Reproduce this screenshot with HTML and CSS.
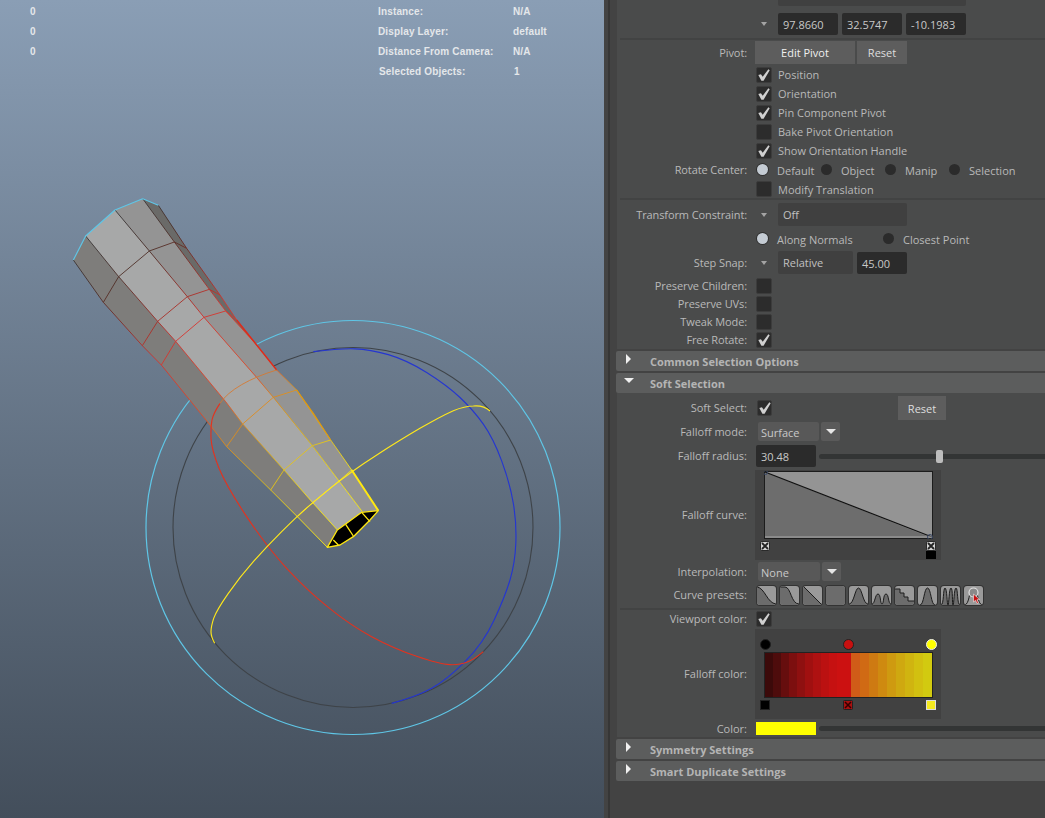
FILE: index.html
```html
<!DOCTYPE html>
<html lang="en">
<head>
    <meta charset="UTF-8">
    <title>Soft Selection</title>
    <link rel="stylesheet" href="styles.css">
</head>
<body>
    <svg class="defs">
        <symbol id="check" viewBox="0 0 16 16">
            <path d="M1.500 8 L4.500 7 L6.500 10 L13 1.500 L14.500 2.500 L7.500 14.500 L5 14.500 Z" fill="#d0d0d0"/>
        </symbol>
        <symbol id="cross" viewBox="0 0 10 10">
            <rect x="0.5" y="0.5" width="9" height="9" rx="1.500" fill="#d4d4d4" stroke="#2a2a2a"/>
            <path d="M2 2 L8 8 M8 2 L2 8" stroke="#222" stroke-width="1.800"/>
        </symbol>
    </svg>

    <main class="viewport">
        <svg class="scene" width="604" height="818">
            <defs>
                <linearGradient id="edge" gradientUnits="userSpaceOnUse" x1="76" y1="168" x2="832" y2="1050">
                    <stop offset="0" stop-color="#333"/>
                    <stop offset=".136" stop-color="#4a2a22"/>
                    <stop offset=".289" stop-color="#a82a22"/>
                    <stop offset=".358" stop-color="#d8302a"/>
                    <stop offset=".56" stop-color="#e84a20"/>
                    <stop offset=".633" stop-color="#e08a18"/>
                    <stop offset=".793" stop-color="#e8c410"/>
                    <stop offset=".905" stop-color="#ffe810"/>
                    <stop offset="1" stop-color="#ffee10"/>
                </linearGradient>
            </defs>

            <circle cx="353" cy="527.5" r="207" fill="none" stroke="#5fc6e6" stroke-width="1.200"/>
            <circle cx="353" cy="527.5" r="180" fill="none" stroke="#3e4348" stroke-width="1.100"/>

            <!-- mesh, coordinates taken at 3x -->
            <g transform="translate(60 180) scale(.33333)" stroke-linejoin="round" fill="none">
                <polygon fill="#6a6a68" points="248,56 295,76 380,205 480,345 530,420 590,495 497,393 448,328 343,186"/>
                <polygon fill="#7e7d7b" points="40,240 130,367 247,497 304,555 450,735 500,800 632,930 712,1010 802,1102 832,1050 758,968 672,870 548,732 497,665 347,484 293,424 176,290 77,168"/>
                <polygon fill="#a7a8a8" points="77,168 176,290 293,424 347,484 497,665 548,732 672,870 758,968 832,1050 907,995 837,903 757,797 640,652 588,590 432,412 382,350 268,213 165,90"/>
                <polygon fill="#949494" points="165,90 268,213 382,350 432,412 588,590 640,652 757,797 837,903 907,995 955,992 875,870 812,780 710,630 650,570 590,495 497,393 448,328 343,186 248,56"/>

                <g stroke="url(#edge)" stroke-width="2.600">
                    <polyline points="40,240 130,367 247,497 304,555 450,735 500,800 632,930 712,1010 802,1102"/>
                    <polyline points="77,168 176,290 293,424 347,484 497,665 548,732 672,870 758,968 832,1050"/>
                    <polyline points="165,90 268,213 382,350 432,412 588,590 640,652 757,797 837,903 907,995"/>
                    <polyline points="248,56 343,186 448,328 497,393 590,495 650,570 710,630 812,780 875,870 955,992"/>
                    <polyline points="295,76 380,205 480,345 530,420 590,495"/>
                    <polyline points="130,367 176,290 268,213 343,186 380,205"/>
                    <polyline points="247,497 293,424 382,350 448,328 480,345"/>
                    <polyline points="304,555 347,484 432,412 497,393 530,420"/>
                    <polyline points="500,800 548,732 640,652 710,630"/>
                    <polyline points="632,930 672,870 757,797 812,780"/>
                    <polyline points="712,1010 758,968 837,903 875,870"/>
                </g>
                <polyline points="530,420 590,495 650,570" stroke="#e02a1a" stroke-width="4"/>
                <polyline points="710,630 760,700 812,780" stroke="#e09a10" stroke-width="3.500"/>
                <polyline points="875,870 955,992" stroke="#ffe810" stroke-width="6"/>
                <polyline points="40,240 77,168 165,90 248,56 295,76" stroke="#5fc6e6" stroke-width="3.500"/>

                <polygon fill="#000" stroke="#ffe810" stroke-width="4" points="802,1102 840,1095 880,1070 930,1020 955,992 905,997 860,1030 832,1050"/>
                <path d="M857 1033 L880 1068 M905 997 L930 1025 M820 1080 L835 1095" stroke="#ffe810" stroke-width="4"/>
            </g>

            <!-- rotate manip rings -->
            <g transform="translate(140 310) scale(.33333)" fill="none" stroke-width="3.400">
                <path stroke="#2536d0" d="M520 125 Q600 115 645 116.5 Q690 118 745 134 Q800 150 860 187.5 Q920 225 960 262.5 Q1000 300 1030 342.5 Q1060 385 1085 452.5 Q1110 520 1120 580 Q1130 640 1127.5 700 Q1125 760 1110 810 Q1095 860 1062.5 930 Q1030 1000 975 1055 Q920 1110 875 1135 Q830 1160 755 1180"/>
                <path stroke="#e2331f" d="M1030 1025 Q1000 1050 980 1057 Q960 1065 930 1064 Q900 1063 830 1039 Q760 1015 695 980 Q630 945 565 892 Q500 840 440 775 Q380 710 320 620 Q260 530 237 475 Q215 420 213 385 Q212 350 216 330 Q220 310 240 280"/>
                <path stroke="#d9772a" stroke-width="2.500" d="M240 280 Q260 250 305 224 Q350 198 410 180"/>
                <path stroke="#ffe81a" d="M1050 303 Q1030 285 1000 288 Q975 288 940 302 Q900 320 840 355 Q780 390 707 437 Q635 483 577 530 Q520 577 495 598 Q470 620 425 665 Q380 710 340 755 Q300 800 265 850 Q230 900 221 925 Q213 950 213 965 Q213 980 224 1000"/>
            </g>
        </svg>

        <div class="hud">
            <span>0</span><span>Instance:</span><span>N/A</span>
            <span>0</span><span>Display Layer:</span><span>default</span>
            <span>0</span><span>Distance From Camera:</span><span>N/A</span>
            <span></span><span class="hud-shift">Selected Objects:</span><span class="hud-shift">1</span>
        </div>
    </main>

    <aside class="panel">
        <div class="group group-top">
            <div class="cut-field"></div>

            <div class="row row-vec">
                <label></label>
                <span class="arrow"></span>
                <span class="input w60">97.8660</span>
                <span class="input w60">32.5747</span>
                <span class="input w60">-10.1983</span>
            </div>
            <div class="sep"></div>

            <div class="row row-btn">
                <label>Pivot:</label>
                <button class="btn btn-strong w100">Edit Pivot</button>
                <button class="btn w50">Reset</button>
            </div>
            <div class="row row-19"><label></label><span class="box"><svg><use href="#check"/></svg></span><span class="cap">Position</span></div>
            <div class="row row-19"><label></label><span class="box"><svg><use href="#check"/></svg></span><span class="cap">Orientation</span></div>
            <div class="row row-19"><label></label><span class="box"><svg><use href="#check"/></svg></span><span class="cap">Pin Component Pivot</span></div>
            <div class="row row-19"><label></label><span class="box"></span><span class="cap">Bake Pivot Orientation</span></div>
            <div class="row row-19"><label></label><span class="box"><svg><use href="#check"/></svg></span><span class="cap">Show Orientation Handle</span></div>
            <div class="row row-20">
                <label>Rotate Center:</label>
                <div class="radios">
                    <span class="radio-item"><i class="radio on"></i>Default</span>
                    <span class="radio-item"><i class="radio"></i>Object</span>
                    <span class="radio-item"><i class="radio"></i>Manip</span>
                    <span class="radio-item"><i class="radio"></i>Selection</span>
                </div>
            </div>
            <div class="row row-18"><label></label><span class="box"></span><span class="cap">Modify Translation</span></div>
            <div class="sep sep-low"></div>

            <div class="row row-drop">
                <label>Transform Constraint:</label>
                <span class="arrow"></span>
                <span class="drop w129">Off</span>
            </div>
            <div class="row row-18 row-normals">
                <label></label>
                <div class="radios radios-wide">
                    <span class="radio-item"><i class="radio on"></i>Along Normals</span>
                    <span class="radio-item"><i class="radio"></i>Closest Point</span>
                </div>
            </div>
            <div class="row row-snap">
                <label>Step Snap:</label>
                <span class="arrow"></span>
                <span class="drop w75">Relative</span>
                <span class="input w50 input-snap">45.00</span>
            </div>
            <div class="row row-18 row-first"><label>Preserve Children:</label><span class="box"></span></div>
            <div class="row row-18"><label>Preserve UVs:</label><span class="box"></span></div>
            <div class="row row-18"><label>Tweak Mode:</label><span class="box"></span></div>
            <div class="row row-18"><label>Free Rotate:</label><span class="box"><svg><use href="#check"/></svg></span></div>
        </div>

        <div class="header"><i class="tri-right"></i>Common Selection Options</div>
        <div class="header"><i class="tri-down"></i>Soft Selection</div>

        <div class="group group-soft">
            <div class="row row-24">
                <label>Soft Select:</label>
                <span class="box box-narrow"><svg><use href="#check"/></svg></span>
                <button class="btn w48 btn-soft-reset">Reset</button>
            </div>
            <div class="row row-option">
                <label>Falloff mode:</label>
                <span class="option w61">Surface</span>
                <span class="option-arrow"></span>
            </div>
            <div class="row row-radius">
                <label>Falloff radius:</label>
                <span class="input w60 input-radius">30.48</span>
                <div class="track"><i class="thumb"></i></div>
            </div>

            <div class="row row-panel row-curve">
                <label>Falloff curve:</label>
                <div class="ramp">
                    <svg class="graph" width="169" height="68">
                        <rect width="169" height="68" fill="#949494"/>
                        <polygon points="1,1 168,67 1,67" fill="#6d6d6d"/>
                        <line x1="1" y1="1" x2="168" y2="66" stroke="#111" stroke-width="1.200"/>
                        <rect x="0.5" y="0.5" width="168" height="67" fill="none" stroke="#1c1c1c"/>
                        <line x1="1" y1="66" x2="168" y2="66" stroke="#aaa"/>
                        <circle cx="1.500" cy="1.500" r="2" fill="none" stroke="#3b4866"/>
                        <circle cx="166" cy="66" r="2.500" fill="none" stroke="#3b4866"/>
                    </svg>
                    <svg class="mark mark-left"><use href="#cross"/></svg>
                    <svg class="mark mark-right"><use href="#cross"/></svg>
                    <i class="mark mark-right mark-black"></i>
                </div>
            </div>

            <div class="row row-option">
                <label>Interpolation:</label>
                <span class="option w62">None</span>
                <span class="option-arrow"></span>
            </div>
            <div class="row row-presets">
                <label>Curve presets:</label>
                <div class="presets">
                    <svg class="preset"><path class="low" d="M0 1 C8 2 10 17 19 18 V19 H0 Z"/><path class="ln" d="M0 1 C8 2 10 17 19 18"/></svg>
                    <svg class="preset"><path class="low" d="M0 1 H5 C11 1 11 18 19 18 V19 H0 Z"/><path class="ln" d="M0 1 H5 C11 1 11 18 19 18"/></svg>
                    <svg class="preset"><path class="low" d="M0 0 L19 19 H0 Z"/><path class="ln" d="M0 0 L19 19"/></svg>
                    <svg class="preset"><rect class="low" width="19" height="19"/></svg>
                    <svg class="preset"><path class="low" d="M0 18 C5 18 6 2 9.500 2 C13 2 14 18 19 18 V19 H0 Z"/><path class="ln" d="M0 18 C5 18 6 2 9.500 2 C13 2 14 18 19 18"/></svg>
                    <svg class="preset"><path class="low" d="M0 18 C3 18 3 8 6 8 C9 8 8 18 10 18 C12 18 11 8 14 8 C17 8 16 18 19 18 V19 H0 Z"/><path class="ln" d="M0 18 C3 18 3 8 6 8 C9 8 8 18 10 18 C12 18 11 8 14 8 C17 8 16 18 19 18"/></svg>
                    <svg class="preset"><path class="low" d="M0 3 H5 V7 H9 V11 H13 V15 H19 V19 H0 Z"/><path class="ln" d="M0 3 H5 V7 H9 V11 H13 V15 H19"/></svg>
                    <svg class="preset"><path class="low" d="M2 19 C6 19 6 2 9.500 2 C13 2 13 19 17 19 Z"/><path class="ln" d="M2 19 C6 19 6 2 9.500 2 C13 2 13 19 17 19"/></svg>
                    <svg class="preset"><path class="low" d="M0 19 C3 19 2 2 4 2 C6 2 6 19 7 19 C8 19 8 2 10 2 C12 2 11 19 12 19 C13 19 13 2 15 2 C17 2 16 19 19 19 Z"/><path class="ln" d="M0 19 C3 19 2 2 4 2 C6 2 6 19 7 19 C8 19 8 2 10 2 C12 2 11 19 12 19 C13 19 13 2 15 2 C17 2 16 19 19 19"/></svg>
                    <svg class="preset">
                        <path class="ln" d="M1 19 C5 17 5 9 6 8 M13 8 C14 10 14 17 18 19"/>
                        <circle cx="9.500" cy="6.500" r="4.500" fill="#8a8a8a" stroke="#e4e4e4" stroke-width="1.200"/>
                        <path d="M9.500 8 L9.500 16 L11.500 14.300 L13 17.500 L14.500 16.800 L13 13.800 L15.500 13.500 Z" fill="#c81010" stroke="#eee" stroke-width=".6"/>
                    </svg>
                </div>
            </div>
            <div class="sep sep-preset"></div>

            <div class="row row-18"><label>Viewport color:</label><span class="box"><svg><use href="#check"/></svg></span></div>

            <div class="row row-panel row-color">
                <label>Falloff color:</label>
                <div class="ramp">
                    <i class="dot dot-a"></i>
                    <i class="dot dot-b"></i>
                    <i class="dot dot-c"></i>
                    <div class="bands"></div>
                    <i class="mark mark-left swatch-a"></i>
                    <svg class="mark mark-mid"><rect x=".5" y=".5" width="9" height="9" rx="1" fill="#a81010" stroke="#222"/><path d="M2 2 L8 8 M8 2 L2 8" stroke="#300" stroke-width="1.500"/></svg>
                    <i class="mark mark-right swatch-c"></i>
                </div>
            </div>

            <div class="row row-swatch">
                <label>Color:</label>
                <span class="swatch"></span>
                <div class="track track-thin"></div>
            </div>
        </div>

        <div class="header"><i class="tri-right"></i>Symmetry Settings</div>
        <div class="header"><i class="tri-right"></i>Smart Duplicate Settings</div>
    </aside>
</body>
</html>
```

FILE: styles.css
```css
* {
    margin: 0;
    padding: 0;
    box-sizing: border-box;
}

html, body {
    height: 100%;
    overflow: hidden;
}

body {
    display: flex;
    background-color: #444;
    font-family: "Open Sans", "Liberation Sans", sans-serif;
    font-size: 11px;
    color: #b9b9b9;
}

.defs {
    display: none;
}

/* 3d view */
.viewport {
    position: relative;
    flex: 0 0 604px;
    height: 818px;
    background: linear-gradient(#8a9eb5, #434e5b);
}

.scene {
    position: absolute;
    left: 0;
    top: 0;
}

.hud {
    position: absolute;
    left: 30px;
    top: 1px;
    display: grid;
    grid-template-columns: 348px 135px auto;
    grid-auto-rows: 20px;
    align-items: center;
    font-family: "Liberation Sans", sans-serif;
    font-weight: bold;
    font-size: 10px;
    letter-spacing: 0.15px;
    color: #e4e7ea;
}

.hud-shift {
    margin-left: 1px;
}

/* side panel */
.panel {
    flex: 1;
    min-width: 0;
    height: 818px;
    padding-left: 12px;
    background:
        linear-gradient(#363636, #363636) 4px 0 / 2px 100% no-repeat,
        #434343;
    overflow: hidden;
}

.group {
    margin-left: 1px;
    background-color: #4a4b4b;
}

.group-top {
    height: 349px;
}

.group-soft {
    height: 344px;
    padding-top: 3px;
}

.cut-field {
    width: 188px;
    height: 6px;
    margin-left: 161px;
    border-radius: 0 0 2px 2px;
    background-color: #404040;
}

.sep {
    height: 2px;
    margin: 3px 0 1px 3px;
    background-color: #424343;
}

.sep-low {
    margin-top: 0;
    margin-bottom: 3px;
}

.sep-preset {
    margin-top: 3px;
    margin-bottom: 0;
}

.header {
    position: relative;
    height: 20px;
    margin-top: 2px;
    padding-left: 34px;
    line-height: 21px;
    font-weight: bold;
    color: #b4b4b4;
    background-color: #5c5d5d;
    border-radius: 2px 0 0 2px;
}

.tri-right {
    position: absolute;
    left: 10px;
    top: 3px;
    border-left: 5px solid #f0f0f0;
    border-top: 5px solid transparent;
    border-bottom: 5px solid transparent;
}

.tri-down {
    position: absolute;
    left: 8px;
    top: 5px;
    border-top: 5px solid #f0f0f0;
    border-left: 5px solid transparent;
    border-right: 5px solid transparent;
}

.row {
    display: flex;
    align-items: center;
    white-space: nowrap;
}

.row label {
    flex: 0 0 130px;
    margin-right: 8px;
    text-align: right;
}

.group-top .row label {
    letter-spacing: -0.1px;
}

/* these labels sit a pixel above the row centre */
.row-18 label,
.row-20 label,
.row-24 label,
.row-radius label,
.row-panel label,
.row-presets label {
    padding-bottom: 2px;
}

.row-vec { height: 22px; margin-top: 7px; }
.row-btn { height: 23px; margin-bottom: 1px; }
.row-19 { height: 19px; }
.row-20 { height: 20px; }
.row-18 { height: 18px; }
.row-24 { height: 24px; }
.row-drop { height: 23px; }
.row-normals { margin-top: 4px; }
.row-snap { height: 23px; margin-top: 3px; }
.row-first { margin-top: 3px; }
.row-option { height: 19px; margin-top: 2px; }
.row-radius { height: 22px; margin-top: 4px; }
.row-panel { height: 90px; }
.row-curve { margin-top: 3px; }
.row-color { margin-top: 1px; }
.row-presets { height: 19px; margin-top: 5px; }
.row-swatch { height: 13px; margin-top: 3px; }

.arrow {
    position: relative;
    flex: 0 0 23px;
    height: 0;
}

.arrow::after {
    content: "";
    position: absolute;
    left: 6px;
    top: -2px;
    border-top: 4px solid #a4a4a4;
    border-left: 3.5px solid transparent;
    border-right: 3.5px solid transparent;
}

.input {
    display: block;
    height: 22px;
    margin-right: 4px;
    padding-left: 5px;
    line-height: 23px;
    border-radius: 2px;
    color: #c8c8c8;
    background-color: #2b2b2b;
}

.input-snap {
    margin-left: 4px;
}

.input-radius {
    margin-left: 1px;
    margin-right: 3px;
}

.drop {
    display: block;
    height: 23px;
    padding-left: 5px;
    line-height: 23px;
    border-radius: 2px;
    color: #c0c0c0;
    background-color: #404040;
}

.w48 { width: 48px; }
.w50 { width: 50px; }
.w60 { width: 60px; }
.w61 { width: 61px; }
.w62 { width: 62px; }
.w75 { width: 75px; }
.w100 { width: 100px; }
.w129 { width: 129px; }

.btn {
    height: 23px;
    border: none;
    font: inherit;
    color: #dedede;
    background-color: #5d5d5d;
}

.btn-strong {
    margin-right: 2px;
    color: #f0f0f0;
}

.btn-soft-reset {
    height: 24px;
    margin-left: 126px;
}

.box {
    flex: 0 0 16px;
    width: 16px;
    height: 16px;
    margin-left: 1px;
    border: 1px solid #3c3c3c;
    border-radius: 2px;
    background-color: #2c2c2c;
}

.box svg {
    display: block;
    width: 14px;
    height: 14px;
}

.box-narrow {
    flex-basis: 15px;
    width: 15px;
    margin-left: 2px;
}

.cap {
    margin-left: 6px;
}

.radios {
    display: grid;
    grid-template-columns: repeat(4, 64px);
    margin-left: 2px;
}

.radios-wide {
    grid-template-columns: 126px auto;
}

.radio-item {
    display: flex;
    align-items: center;
    line-height: 16px;
    padding-top: 2px;
}

.radio {
    flex: 0 0 11px;
    width: 11px;
    height: 11px;
    margin: -3px 9px 0 0;
    border-radius: 50%;
    background-color: #2b2b2b;
}

.radio.on {
    background-color: #c4cbd3;
    box-shadow: 0 0 0 1px #2f2f2f;
}

.option {
    display: block;
    height: 19px;
    margin-left: 3px;
    padding-left: 3px;
    line-height: 21px;
    border-radius: 2px;
    color: #c8c8c8;
    background-color: #585858;
}

.option-arrow {
    position: relative;
    flex: 0 0 19px;
    height: 19px;
    margin-left: 2px;
    border-radius: 2px;
    background-color: #5a5a5a;
}

.option-arrow::after {
    content: "";
    position: absolute;
    left: 5px;
    top: 7px;
    border-top: 5px solid #e6e6e6;
    border-left: 5px solid transparent;
    border-right: 5px solid transparent;
}

.track {
    position: relative;
    flex: 1;
    height: 5px;
    border-radius: 3px 0 0 3px;
    background-color: #333535;
}

.thumb {
    position: absolute;
    left: 117px;
    top: -4px;
    width: 7px;
    height: 13px;
    border-radius: 2px;
    background-color: #bdbdbd;
}

.track-thin {
    margin-left: 3px;
}

.swatch {
    flex: 0 0 60px;
    height: 13px;
    margin-left: 1px;
    background-color: #ffff00;
}

/* curve and colour ramps */
.ramp {
    position: relative;
    width: 186px;
    height: 90px;
    background-color: #414141;
}

.graph {
    position: absolute;
    left: 9px;
    top: 1px;
}

.mark {
    position: absolute;
    display: block;
    top: 71px;
    width: 10px;
    height: 10px;
}

.mark-left { left: 5px; }
.mark-mid { left: 88px; }
.mark-right { left: 171px; }

.mark-black {
    top: 81px;
    height: 8px;
    background-color: #000;
}

.swatch-a {
    background-color: #000;
    border: 1px solid #222;
}

.swatch-c {
    background-color: #f4ea20;
    border: 1px solid #ddd;
}

.dot {
    position: absolute;
    top: 10px;
    width: 11px;
    height: 11px;
    border-radius: 50%;
    border: 1px solid #222;
}

.dot-a { left: 5px; background-color: #000; }
.dot-b { left: 88px; background-color: #c81010; }
.dot-c { left: 171px; background-color: #ffff00; border-color: #eee; }

.bands {
    position: absolute;
    left: 9px;
    top: 23px;
    width: 169px;
    height: 46px;
    border: 1px solid #222;
    background: linear-gradient(to right,
        #3c0a0a 0 8px, #4e0c0c 8px 16px, #660e0e 16px 24px, #7c0f0f 24px 32px,
        #8e1010 32px 40px, #a01010 40px 48px, #ae1111 48px 56px, #bb1111 56px 64px,
        #c61111 64px 72px, #cc1111 72px 86px,
        #d05c18 86px 95px, #d06a14 95px 104px, #ce7a12 104px 113px, #cf8a10 113px 122px,
        #cf9a10 122px 131px, #cfa810 131px 140px, #d0b410 140px 149px, #d2c010 149px 158px,
        #d2ca10 158px 169px);
}

.presets {
    display: flex;
    gap: 4px;
    margin-left: 2px;
}

.preset {
    width: 19px;
    height: 19px;
    border-radius: 3px;
    background-color: #9a9a9a;
    box-shadow: 0 0 0 1px #333;
}

.preset .low {
    fill: #6c6c6c;
}

.preset .ln {
    fill: none;
    stroke: #1c1c1c;
    stroke-width: 1;
}
```
